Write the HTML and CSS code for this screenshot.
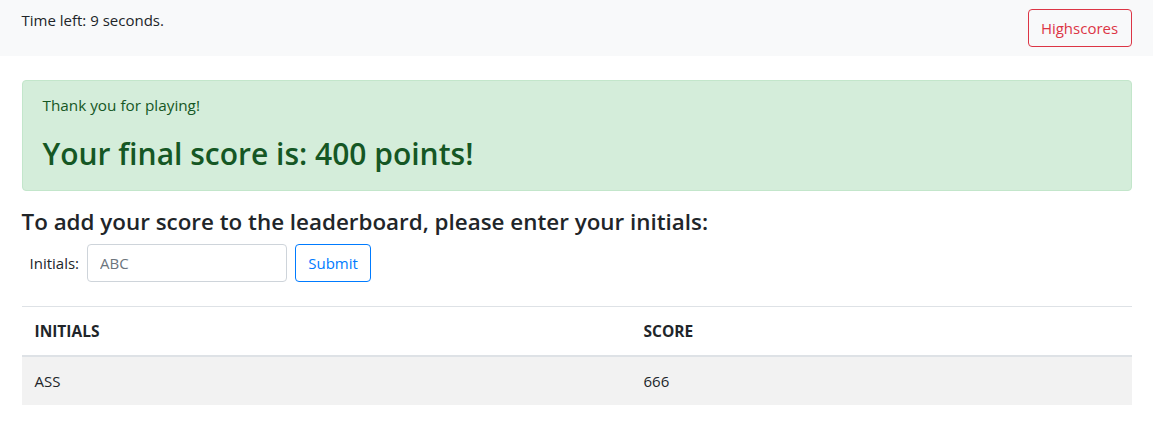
FILE: index.html
```html
<!DOCTYPE html>
<html>
<head>
<meta charset="utf-8">
<link rel="stylesheet" href="styles.css">
</head>
<body>
<nav class="navbar">
  <div class="container nav-inner">
    <span class="timer">Time left: 9 seconds.</span>
    <button class="btn btn-danger-outline">Highscores</button>
  </div>
</nav>
<main class="container main">
  <div class="alert">
    <p class="alert-text">Thank you for playing!</p>
    <h2 class="alert-heading">Your final score is: 400 points!</h2>
  </div>
  <h4 class="prompt">To add your score to the leaderboard, please enter your initials:</h4>
  <form class="form-inline">
    <label class="form-label">Initials:</label>
    <input class="form-input" type="text" placeholder="ABC">
    <button class="btn btn-primary-outline" type="button">Submit</button>
  </form>
  <table class="table">
    <thead>
      <tr><th class="col-initials">INITIALS</th><th>SCORE</th></tr>
    </thead>
    <tbody>
      <tr class="striped"><td>ASS</td><td>666</td></tr>
    </tbody>
  </table>
</main>
</body>
</html>
```
FILE: styles.css
```css
* { box-sizing: border-box; }
html, body { margin: 0; padding: 0; }
body {
  font-family: "Open Sans", "Noto Sans", sans-serif;
  font-size: 16px;
  line-height: 1.5;
  color: #212529;
  background: #fff;
}
.container {
  width: 1110px;
  margin: 0 auto;
}
.navbar {
  background: #f8f9fa;
  height: 56px;
  padding-top: 8px;
}
.nav-inner {
  display: flex;
  justify-content: space-between;
  align-items: flex-start;
}
.timer {
  font-size: 15px;
  line-height: 24px;
}
.btn {
  font-family: inherit;
  font-size: 15px;
  line-height: 24px;
  padding: 6px 12px;
  border-radius: 4px;
  background: transparent;
  cursor: pointer;
}
.btn-danger-outline {
  color: #dc3545;
  border: 1px solid #dc3545;
  margin-top: 1px;
  width: 104px;
}
.btn-primary-outline {
  color: #007bff;
  border: 1px solid #007bff;
  width: 76px;
}
.main { padding-top: 24px; }
.alert {
  background: #d4edda;
  border: 1px solid #c3e6cb;
  color: #155724;
  border-radius: 4px;
  padding: 12px 20px;
  margin-bottom: 16px;
  height: 111px;
}
.alert-text {
  margin: 0 0 18px;
  font-size: 15.3px;
  line-height: 24px;
}
.alert-heading {
  margin: 0;
  font-size: 30px;
  font-weight: 600;
  line-height: 38px;
}
.prompt {
  margin: 0 0 8px;
  padding-top: 2px;
  font-size: 22.4px;
  font-weight: 600;
  line-height: 26.8px;
}
.form-inline {
  display: flex;
  align-items: center;
  gap: 8px;
  padding-left: 8px;
  margin-bottom: 24px;
}
.form-label { font-size: 15px; }
.form-input {
  width: 200px;
  height: 38px;
  padding: 6px 12px;
  font-family: inherit;
  font-size: 15px;
  color: #495057;
  border: 1px solid #ced4da;
  border-radius: 4px;
}
.form-input::placeholder { color: #6c757d; }
.table {
  width: 100%;
  border-collapse: collapse;
  font-size: 15px;
}
.table th, .table td {
  text-align: left;
  padding: 12px 12px 12px 13px;
  border-top: 1px solid #dee2e6;
  line-height: 24px;
}
.table thead th {
  border-bottom: 2px solid #dee2e6;
  font-weight: 700;
  font-size: 15.5px;
}
.col-initials { width: 609px; }
.striped td { background: #f2f2f2; }
```
